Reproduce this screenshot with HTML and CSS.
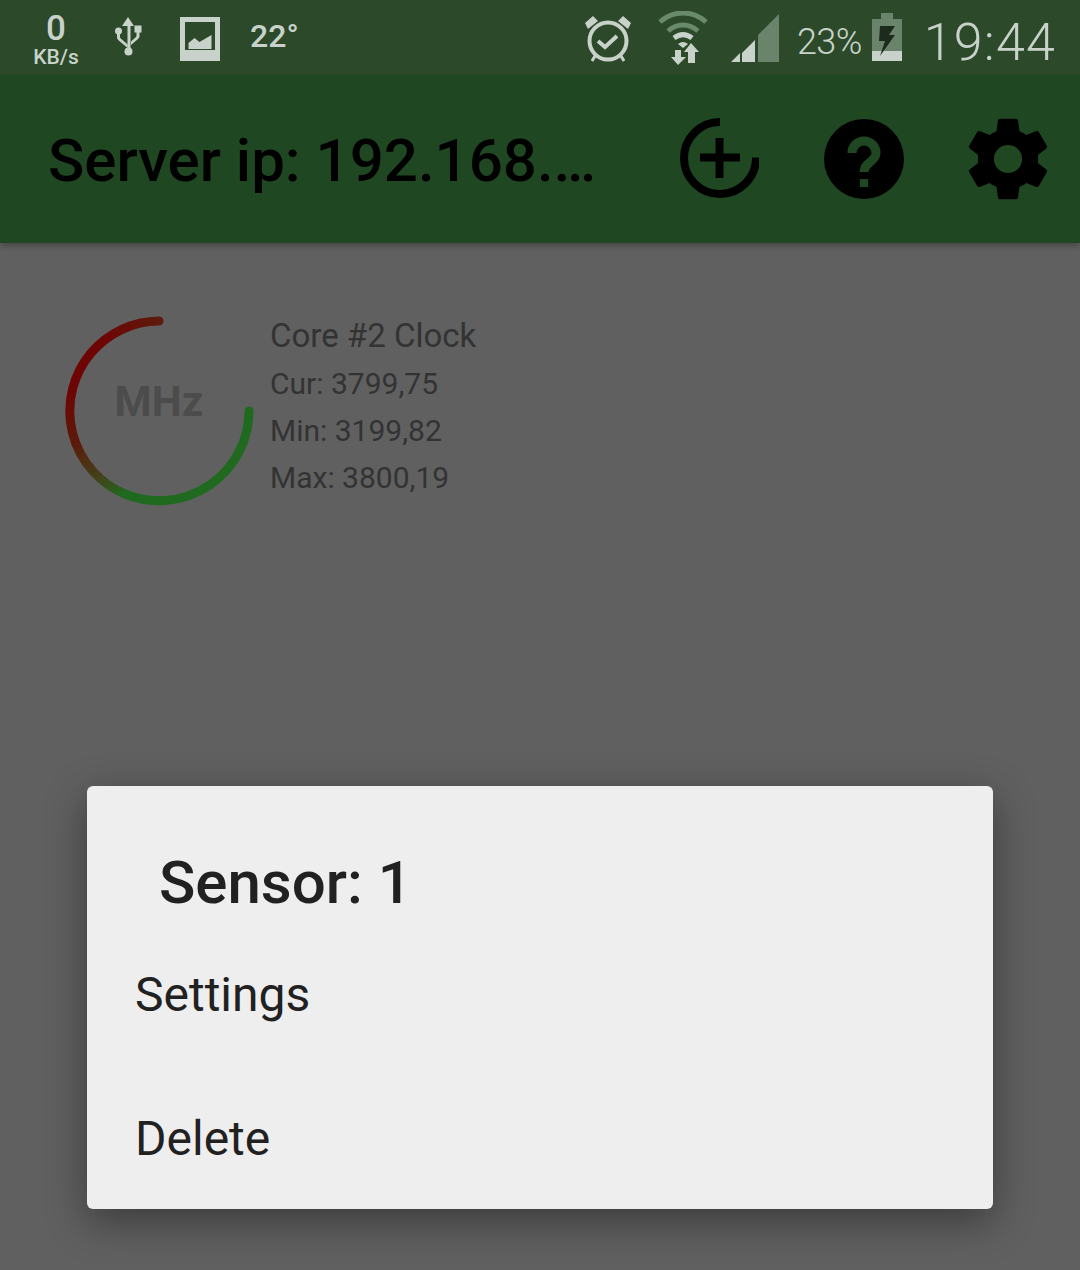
FILE: index.html
```html
<!DOCTYPE html>
<html lang="en">
<head>
<meta charset="utf-8">
<title>Server monitor</title>
<link rel="stylesheet" href="styles.css">
</head>
<body>
<div class="screen">
  <header class="statusbar">
    <div class="speed"><span class="speed-num">0</span><span class="speed-unit">KB/s</span></div>
    <svg class="ic-usb" width="30" height="42" viewBox="0 0 30 42">
      <path class="sb-fill" d="M14 0l6 9h-3.500v24h-3V9H8z"/>
      <circle class="sb-fill" cx="14.500" cy="34.500" r="4"/>
      <circle class="sb-fill" cx="4.500" cy="14" r="3.500"/>
      <path class="sb-fill" d="M20.500 8.500h7v7h-2V19a4 4 0 0 1-1.500 3l-7 6v-3.500l5-4.500a2 2 0 0 0 .5-1.500v-3h-2z"/>
      <path class="sb-fill" d="M3 16h3v4a2 2 0 0 0 .7 1.500l7 6V31l-9-7.500A4 4 0 0 1 3 20z"/>
    </svg>
    <svg class="ic-img" width="40" height="44" viewBox="0 0 40 44">
      <path class="sb-fill" fill-rule="evenodd" d="M0 0h40v44H0zM5 5v28h30V5z"/>
      <path class="sb-fill" d="M8.500 32v-6l6-5 5 4 12-7v14z"/>
    </svg>
    <span class="temp">22°</span>
    <div class="sb-spacer"></div>
    <svg class="ic-alarm" width="46" height="48" viewBox="0 0 46 48">
      <circle class="sb-stroke" cx="23" cy="26" r="18.500" stroke-width="4"/>
      <path class="sb-stroke" stroke-width="4" d="M13 26l7 6 12-11"/>
      <path class="sb-fill" d="M0 8l8-7 5 5-10 8zM46 8l-8-7-5 5 10 8z"/>
      <path class="sb-stroke" stroke-width="3" d="M10 41l-3 5M36 41l3 5"/>
    </svg>
    <svg class="ic-wifi" width="50" height="54" viewBox="0 0 50 54">
      <path class="sb-dim" stroke-width="5" fill="none" d="M2 11C15-1 35-1 48 11"/>
      <path class="sb-dim" stroke-width="5" fill="none" d="M10 20c9-8 21-8 30 0"/>
      <path class="sb-stroke" stroke-width="5" d="M16 27c6-4.500 12-4.500 18 0"/>
      <path class="sb-fill" d="M20 33q5-4 10 0l-5 4z"/>
      <path class="sb-fill" d="M17 39h6v7h5l-8 8-7-8h4zM30 52V41h-4l7-9 8 9h-4v11z"/>
    </svg>
    <svg class="ic-signal" width="48" height="48" viewBox="0 0 48 48">
      <path class="sb-dim-fill" d="M48 0v48H27V21z"/>
      <path class="sb-fill" d="M24 26v22H11v-9zM9 39v9H0z"/>
    </svg>
    <span class="pct">23%</span>
    <svg class="ic-batt" width="30" height="48" viewBox="0 0 30 48">
      <path class="sb-dim-fill" d="M9 0h12v6h9v32H0V6h9z"/>
      <path class="sb-fill" d="M0 38h30v10H0z"/>
      <path class="bolt" d="M8 13h15l-6 9h6L8 43l5-15H7z"/>
    </svg>
    <span class="clock">19:44</span>
  </header>

  <div class="appbar">
    <h1 class="app-title">Server ip: 192.168.…</h1>
    <svg class="action ic-add" width="80" height="80" viewBox="0 0 80 80">
      <path class="act-stroke" d="M41 4A36 36 0 1 0 77 39.500"/>
      <path class="act-stroke" d="M21 39.500h40M40.500 20v40"/>
    </svg>
    <svg class="action ic-help" width="80" height="80" viewBox="0 0 80 80">
      <circle cx="40" cy="40" r="40"/>
      <path class="help-mark" d="M28 34a12 12 0 0 1 24 0c0 9-12 9-12 19"/>
      <path class="help-dot" d="M36 60h8v8h-8z"/>
    </svg>
    <svg class="action ic-gear" width="80" height="82" viewBox="2.100 2.100 19.800 20.400">
      <path d="M19.430 13.280c.04-.32.070-.64.070-.98s-.03-.66-.07-.98l2.110-1.650c.19-.15.240-.42.120-.64l-2-3.460c-.12-.22-.39-.3-.61-.22l-2.490 1c-.52-.4-1.080-.73-1.690-.98l-.38-2.650A.49.49 0 0 0 14 2.300h-4c-.25 0-.46.18-.49.42l-.38 2.650c-.61.25-1.170.59-1.690.98l-2.490-1c-.23-.09-.49 0-.61.22l-2 3.460c-.13.22-.07.49.12.64l2.110 1.650c-.04.32-.07.65-.07.98s.03.66.07.98l-2.110 1.650c-.19.15-.24.42-.12.64l2 3.460c.12.22.39.3.61.22l2.490-1c.52.4 1.080.73 1.690.98l.38 2.650c.03.24.24.42.49.42h4c.25 0 .46-.18.49-.42l.38-2.650c.61-.25 1.170-.59 1.690-.98l2.490 1c.23.09.49 0 .61-.22l2-3.460c.12-.22.07-.49-.12-.64zM12 15.800a3.500 3.500 0 1 1 0-7 3.500 3.500 0 0 1 0 7z"/>
    </svg>
  </div>

  <main class="content">
    <section class="sensor">
      <div class="gauge">
        <svg width="196" height="196" viewBox="0 0 196 196">
          <defs>
            <linearGradient id="arc-top" gradientUnits="userSpaceOnUse" x1="94" y1="8" x2="40" y2="30">
              <stop offset="0" stop-color="#5e1a0c"/>
              <stop offset="1" stop-color="#6e0505"/>
            </linearGradient>
            <linearGradient id="arc" gradientUnits="userSpaceOnUse" x1="50" y1="60" x2="100" y2="180">
              <stop offset="0" stop-color="#6e0505"/>
              <stop offset="0.4" stop-color="#5a1c0a"/>
              <stop offset="0.7" stop-color="#42431a"/>
              <stop offset="0.89" stop-color="#1f6a1f"/>
            </linearGradient>
          </defs>
          <path class="arc-red" d="M94 8A90 90 0 0 0 26 40" />
          <path class="arc-mix" d="M26 40A90 90 0 0 0 60 181"/>
          <path class="arc-green" d="M60 181A90 90 0 0 0 184 98"/>
        </svg>
        <span class="gauge-unit">MHz</span>
      </div>
      <div class="readout">
        <div class="read-title">Core #2 Clock</div>
        <div class="read-line">Cur: 3799,75</div>
        <div class="read-line">Min: 3199,82</div>
        <div class="read-line">Max: 3800,19</div>
      </div>
    </section>
  </main>

  <div class="dialog">
    <div class="dialog-title">Sensor: 1</div>
    <div class="dialog-item">Settings</div>
    <div class="dialog-item">Delete</div>
  </div>
</div>
</body>
</html>
```

FILE: styles.css
```css
* { box-sizing: border-box; }
html, body { margin: 0; padding: 0; }
body { background: #606060; font-family: Roboto, "Liberation Sans", sans-serif; }
.screen { width: 1080px; height: 1270px; position: relative; overflow: hidden; background: #606060; display: flex; flex-direction: column; }

.statusbar { height: 75px; background: #2c4a2a; display: flex; align-items: center; padding: 0 24px 0 33px; color: #c8d2ca; flex: none; }
.sb-fill { fill: #c8d2ca; }
.sb-stroke { stroke: #c8d2ca; fill: none; }
.sb-dim { stroke: #6a8a6c; }
.sb-dim-fill { fill: #6a846c; }
.bolt { fill: #1d2b1e; }
.speed { width: 46px; display: flex; flex-direction: column; align-items: center; gap: 2px; margin-top: 8px; }
.speed-num { font-size: 35px; font-weight: 500; height: 28px; line-height: 28px; }
.speed-unit { font-size: 21px; font-weight: 500; height: 24px; line-height: 24px; white-space: nowrap; }
.ic-usb { margin-left: 35px; margin-top: 0; }
.ic-img { margin-left: 36px; margin-top: 2px; }
.temp { font-size: 32px; font-weight: 500; margin-left: 30px; margin-top: -4px; }
.sb-spacer { flex: 1; }
.ic-alarm { margin-top: 2px; margin-right: 27px; margin-left: 1px; }
.ic-wifi { margin-top: 0; margin-right: 23px; }
.ic-signal { margin-top: 0; margin-right: 18px; }
.pct { font-size: 36px; font-weight: 300; margin-right: 10px; margin-top: 8px; letter-spacing: -0.6px; }
.ic-batt { margin-top: -1px; margin-right: 22px; }
.clock { font-size: 52px; font-weight: 300; margin-top: 9px; letter-spacing: 1.2px; }

.appbar { height: 168px; background: #1f4822; display: flex; align-items: center; padding: 0 32px 0 48px; box-shadow: 0 3px 6px rgba(0,0,0,.25); flex: none; position: relative; }
.app-title { margin: 2px 0 0; flex: 1; font-size: 60px; font-weight: 500; color: #000; white-space: nowrap; }
.action { display: block; fill: #000; }
.ic-add { margin-top: -2px; margin-right: 1px; margin-left: -1px; }
.ic-help { margin-left: 64px; }
.ic-gear { margin-left: 64px; }
.act-stroke { fill: none; stroke: #000; stroke-width: 8; }
.help-mark { fill: none; stroke: #1f4822; stroke-width: 9; }
.help-dot { fill: #1f4822; }

.content { flex: 1; padding: 70px 0 0 65px; }
.sensor { display: flex; align-items: flex-start; }
.gauge { position: relative; width: 196px; height: 196px; flex: none; }
.gauge svg { display: block; }
.arc-red, .arc-mix, .arc-green { fill: none; stroke-width: 9; }
.arc-red { stroke: url(#arc-top); stroke-linecap: round; }
.arc-mix { stroke: url(#arc); }
.arc-green { stroke: #1f6a1f; stroke-linecap: round; }
.gauge-unit { position: absolute; left: 0; right: 0; top: 64px; text-align: center; font-size: 42.500px; font-weight: 700; color: #4c4c4c; padding-right: 8px; }
.readout { margin-left: 9px; margin-top: -1px; color: #333333; }
.read-title { font-size: 33px; line-height: 47px; }
.read-line { font-size: 30px; line-height: 47px; position: relative; top: 1px; }

.dialog { position: absolute; left: 87px; top: 786px; width: 906px; height: 423px; background: #eeeeee; border-radius: 6px; box-shadow: 0 12px 40px rgba(0,0,0,.4); color: #212121; }
.dialog-title { font-size: 60px; font-weight: 500; padding: 62px 0 0 72px; line-height: 70px; height: 129px; }
.dialog-item { font-size: 48px; padding-left: 48px; height: 144px; line-height: 160px; }
```
